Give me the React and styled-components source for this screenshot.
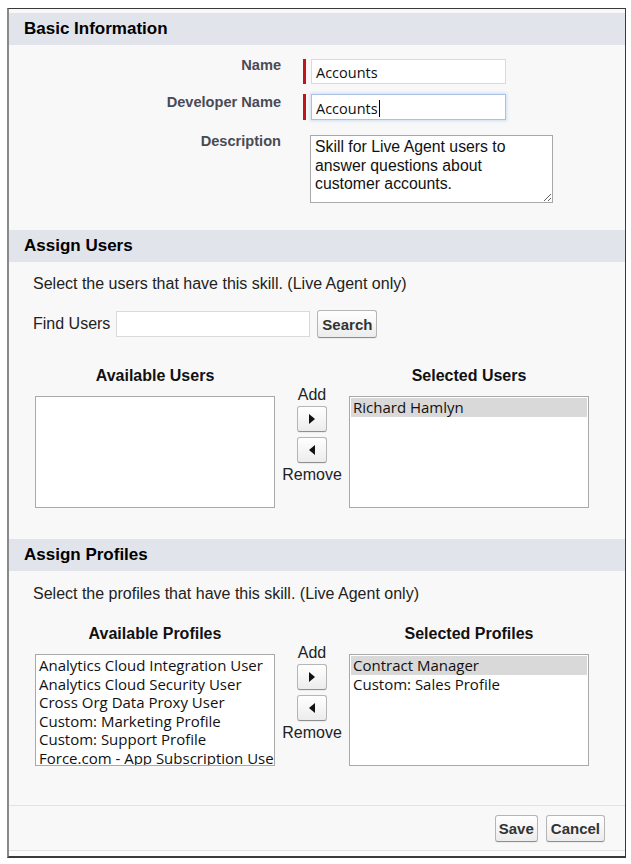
import React from "react";
import styled, { createGlobalStyle } from "styled-components";

const Global = createGlobalStyle`
  html, body { margin: 0; padding: 0; background: #ffffff; }
  body { font-family: "Liberation Sans", Arial, sans-serif; color: #1a1a1a; }
  * { box-sizing: border-box; }
`;

const Frame = styled.div`
  margin: 8px 5px 0 7px;
  border-top: 1px solid #3a3a3a;
  border-left: 2px solid #8a8a8a;
  border-right: 1px solid #3a3a3a;
  border-bottom: 2px solid #3a3a3a;
  background: #f8f8f8;
  padding-top: 4px;
  width: 619px;
`;

const SectionHeader = styled.div`
  height: 32px;
  background: #e2e4eb;
  display: flex;
  align-items: center;
  padding-left: 15px;
  font-weight: bold;
  font-size: 17px;
  color: #000;
`;

const InfoBody = styled.div`
  padding: 14px 0 27px 0;
  display: flex;
  flex-direction: column;
  gap: 10px;
`;

const FieldRow = styled.div`
  display: grid;
  grid-template-columns: 272px auto;
  column-gap: 22px;
  align-items: start;
  margin-top: ${(p) => p.$mt || 0}px;
`;

const FieldLabel = styled.div`
  text-align: right;
  font-weight: bold;
  font-size: 14.6px;
  line-height: 16px;
  color: #4a4a56;
  margin-top: ${(p) => p.$mt || 0}px;
`;

const FieldWrap = styled.div`
  display: flex;
  align-items: stretch;
  gap: 5px;
`;

const Required = styled.div`
  width: 3px;
  background: #c0151b;
`;

const TextBox = styled.div`
  width: 195px;
  height: ${(p) => (p.$focus ? 26 : 25)}px;
  background: #fff;
  border: 1px solid ${(p) => (p.$focus ? "#a9c1e4" : "#dadada")};
  box-shadow: ${(p) => (p.$focus ? "0 0 3px 1px #cfdef3" : "none")};
  font-family: "Open Sans", "Liberation Sans", sans-serif;
  font-size: 14.5px;
  color: #111;
  display: flex;
  align-items: center;
  padding: 2px 4px 0;
`;

const Caret = styled.span`
  display: inline-block;
  width: 1px;
  height: 17px;
  background: #000;
  margin-left: 1px;
`;

const TextArea = styled.textarea`
  width: 243px;
  height: 68px;
  margin-left: 7px;
  border: 1px solid #a8a8a8;
  background: #fff;
  font-family: "Liberation Sans", Arial, sans-serif;
  font-size: 15.8px;
  line-height: 18.5px;
  color: #111;
  padding: 2px 4px;
  resize: both;
  outline: none;
  display: block;
`;

const PlainBody = styled.div`
  padding-top: ${(p) => p.$pt}px;
  height: ${(p) => p.$h}px;
`;

const Intro = styled.div`
  font-size: 16px;
  color: #222;
  padding-left: 24px;
  line-height: 18px;
`;

const FindRow = styled.div`
  display: flex;
  align-items: center;
  padding-left: 24px;
  margin-top: 17px;
  font-size: 16px;
  color: #222;
`;

const FindInput = styled.div`
  width: 194px;
  height: 26px;
  border: 1px solid #dadada;
  background: #fff;
  margin: 0 7px 0 6px;
`;

const Button = styled.button`
  font-family: "Liberation Sans", Arial, sans-serif;
  font-weight: bold;
  font-size: 15px;
  color: #333;
  height: ${(p) => p.$h || 28}px;
  padding: 0 ${(p) => p.$px ?? 4}px;
  border: 1px solid #b5b5b5;
  border-bottom-color: #8f8f8f;
  border-radius: 3px;
  background: linear-gradient(#ffffff, #ececec);
  box-shadow: 0 1px 0 rgba(0, 0, 0, 0.05);
  cursor: pointer;
  display: inline-flex;
  align-items: center;
  justify-content: center;
`;

const Dual = styled.div`
  display: grid;
  grid-template-columns: 240px 74px 240px;
  grid-template-rows: 20px auto;
  row-gap: 10px;
  margin-left: 26px;
  margin-top: ${(p) => p.$mt}px;
`;

const ListTitle = styled.div`
  grid-row: 1;
  grid-column: ${(p) => p.$col};
  text-align: center;
  font-weight: bold;
  font-size: 16px;
  color: #111;
  line-height: 20px;
`;

const Mover = styled.div`
  grid-column: 2;
  grid-row: 1 / span 2;
  padding-top: 20px;
  display: flex;
  flex-direction: column;
  align-items: center;
  font-size: 16px;
  color: #222;
  line-height: 18px;
`;

const MoverLabel = styled.span`
  margin-top: ${(p) => p.$mt || 0}px;
`;

const ArrowBtn = styled(Button)`
  width: 30px;
  height: 26px;
  padding: 0;
  margin-top: ${(p) => p.$mt || 0}px;
`;

const ListBox = styled.div`
  grid-row: 2;
  grid-column: ${(p) => p.$col};
  height: 112px;
  background: #fff;
  border: 1px solid #a9a9a9;
  padding: 1px;
  overflow: hidden;
  font-family: "Open Sans", "Liberation Sans", sans-serif;
  font-size: 15px;
  color: #111;
`;

const Item = styled.div`
  height: 18.6px;
  line-height: 18.6px;
  padding-left: 2px;
  white-space: nowrap;
  background: ${(p) => (p.$sel ? "#d9d9d9" : "transparent")};
`;

const Footer = styled.div`
  border-top: 1px solid #e2e2e2;
  border-bottom: 1px solid #e2e2e2;
  height: 46px;
  display: flex;
  align-items: center;
  justify-content: flex-end;
  gap: 8px;
  padding-right: 20px;
`;

const FooterTail = styled.div`
  height: 5px;
  background: #fbfbfb;
`;

const Tri = ({ dir }) => (
  <svg width="6" height="10" viewBox="0 0 6 10">
    {dir === "right" ? (
      <polygon points="0,0 6,5 0,10" fill="#111" />
    ) : (
      <polygon points="6,0 0,5 6,10" fill="#111" />
    )}
  </svg>
);

const DualList = ({ leftTitle, rightTitle, left, right, mt }) => (
  <Dual $mt={mt}>
    <ListTitle $col={1}>{leftTitle}</ListTitle>
    <ListTitle $col={3}>{rightTitle}</ListTitle>
    <ListBox $col={1}>
      {left.map((t) => (
        <Item key={t}>{t}</Item>
      ))}
    </ListBox>
    <Mover>
      <MoverLabel>Add</MoverLabel>
      <ArrowBtn $mt={2}>
        <Tri dir="right" />
      </ArrowBtn>
      <ArrowBtn $mt={5}>
        <Tri dir="left" />
      </ArrowBtn>
      <MoverLabel $mt={3}>Remove</MoverLabel>
    </Mover>
    <ListBox $col={3}>
      {right.map((t, i) => (
        <Item key={t} $sel={i === 0}>
          {t}
        </Item>
      ))}
    </ListBox>
  </Dual>
);

export default function App() {
  return (
    <>
      <Global />
      <Frame>
        <SectionHeader>Basic Information</SectionHeader>
        <InfoBody>
          <FieldRow>
            <FieldLabel $mt={-2}>Name</FieldLabel>
            <FieldWrap>
              <Required />
              <TextBox>Accounts</TextBox>
            </FieldWrap>
          </FieldRow>
          <FieldRow>
            <FieldLabel $mt={0}>Developer Name</FieldLabel>
            <FieldWrap>
              <Required />
              <TextBox $focus>
                Accounts
                <Caret />
              </TextBox>
            </FieldWrap>
          </FieldRow>
          <FieldRow $mt={5}>
            <FieldLabel $mt={-2}>Description</FieldLabel>
            <FieldWrap>
              <TextArea
                readOnly
                value={"Skill for Live Agent users to answer questions about customer accounts."}
              />
            </FieldWrap>
          </FieldRow>
        </InfoBody>

        <SectionHeader>Assign Users</SectionHeader>
        <PlainBody $h={277} $pt={13}>
          <Intro>Select the users that have this skill. (Live Agent only)</Intro>
          <FindRow>
            <span>Find Users</span>
            <FindInput />
            <Button>Search</Button>
          </FindRow>
          <DualList
            mt={28}
            leftTitle="Available Users"
            rightTitle="Selected Users"
            left={[]}
            right={["Richard Hamlyn"]}
          />
        </PlainBody>

        <SectionHeader>Assign Profiles</SectionHeader>
        <PlainBody $h={234} $pt={14}>
          <Intro>Select the profiles that have this skill. (Live Agent only)</Intro>
          <DualList
            mt={21}
            leftTitle="Available Profiles"
            rightTitle="Selected Profiles"
            left={[
              "Analytics Cloud Integration User",
              "Analytics Cloud Security User",
              "Cross Org Data Proxy User",
              "Custom: Marketing Profile",
              "Custom: Support Profile",
              "Force.com - App Subscription User",
            ]}
            right={["Contract Manager", "Custom: Sales Profile"]}
          />
        </PlainBody>

        <Footer>
          <Button $h={27} $px={3}>Save</Button>
          <Button $h={27} $px={4}>Cancel</Button>
        </Footer>
        <FooterTail />
      </Frame>
    </>
  );
}
